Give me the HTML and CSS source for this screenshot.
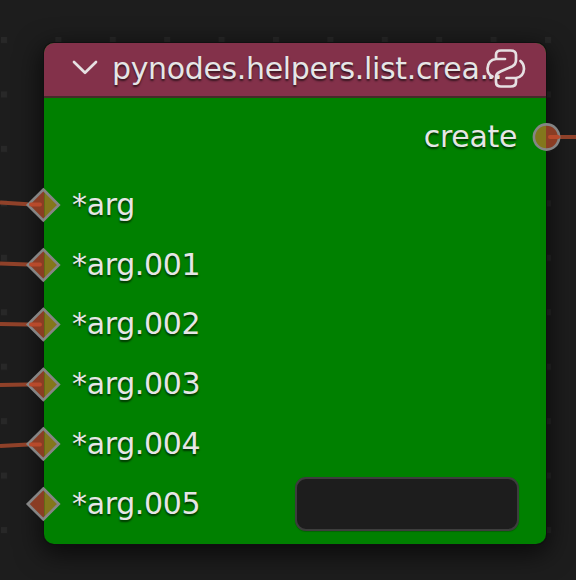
FILE: index.html
```html
<!DOCTYPE html>
<html lang="en">
<head>
<meta charset="utf-8">
<title>Node editor</title>
<link rel="stylesheet" href="styles.css">
</head>
<body>
<main class="editor">
  <svg class="grid" width="576" height="580" aria-hidden="true">
    <defs><pattern id="dots" x="1" y="37" width="54.4" height="54.45" patternUnits="userSpaceOnUse"><rect width="6" height="6" fill="#282828"/></pattern></defs>
    <rect width="576" height="580" fill="url(#dots)"/>
  </svg>
  <section class="node">
    <header class="header">
      <svg class="chevron" width="28" height="20" viewBox="0 0 28 20"><path d="M3 4 L14 14.7 L25 4"/></svg>
      <span class="title">pynodes.helpers.list.crea<span class="dots">...</span></span>
      <svg class="python" width="42" height="42" viewBox="0 0 42 42"><path d="M20 11H11V7Q11 2.500 16 2.500H25.500Q31 2.500 31 7V12Q31 16.500 27 18.500L15.500 23.500Q11 25.500 11 29V34Q11 38.500 16 38.500H25.500Q31 38.500 31 34V30H21.500M11 11Q3 12 2.500 20.500Q2.500 26.500 7.500 28.500M35.500 13Q39 16 39 21Q38.500 29 31 30"/></svg>
    </header>
    <div class="output">create</div>
    <div class="inputs">
      <div class="row">*arg</div>
      <div class="row">*arg.001</div>
      <div class="row">*arg.002</div>
      <div class="row">*arg.003</div>
      <div class="row">*arg.004</div>
      <div class="row"><span>*arg.005</span><div class="field"></div></div>
    </div>
  </section>
  <svg class="links" width="576" height="580" aria-hidden="true">
    <defs>
      <g id="socket"><path class="outside" d="M.5 -16V16L-16 0Z"/><path class="inside" d="M.5 -16L15.500 0L.5 16Z"/><path class="ring" d="M-.7 -15.500L14.800 0L-.7 15.500L-16.200 0Z"/></g>
    </defs>
    <g class="wires">
      <path d="M0 202.500L28 204.200"/><path d="M0 263.500L28 264.500"/><path d="M0 324L28 324.500"/><path d="M0 385L28 384.500"/><path d="M0 446L28 444.500"/><path d="M559 137H576"/>
    </g>
    <use href="#socket" x="44" y="205"/><use href="#socket" x="44" y="265"/><use href="#socket" x="44" y="324.500"/><use href="#socket" x="44" y="384.500"/><use href="#socket" x="44" y="444"/><use href="#socket" x="44" y="504"/>
    <path class="inside" d="M546 124.500A12.500 12.500 0 0 0 546 149.500Z"/><path class="outside" d="M546 124.500A12.500 12.500 0 0 1 546 149.500Z"/>
    <circle class="ring" cx="546.500" cy="137" r="12.600"/>
    <g class="ends">
      <path d="M31 204.500H40"/><path d="M31 264.500H40"/><path d="M31 324.500H40"/><path d="M31 384.500H40"/><path d="M31 444.500H40"/><path d="M550 137H558"/>
    </g>
  </svg>
</main>
</body>
</html>
```
FILE: styles.css
```css
body { margin: 0; background: #1d1d1d; }
.editor {
  position: relative;
  box-sizing: border-box;
  width: 576px;
  height: 580px;
  padding: 43px 30px 36px 44px;
  overflow: hidden;
  background: #1d1d1d;
  color: #e6e6e6;
  font: 30px/36px "DejaVu Sans", sans-serif;
  letter-spacing: -.35px;
  text-shadow: 0 2px 2px rgba(0, 0, 0, .6);
}
.grid, .links { position: absolute; left: 0; top: 0; }
.node {
  position: relative;
  width: 502px;
  height: 501px;
  border-radius: 10px;
  background: #008000;
  box-shadow: 0 0 0 1px #101010, 0 7px 26px 3px rgba(0, 0, 0, .65);
}
.header {
  display: flex;
  align-items: center;
  box-sizing: border-box;
  height: 55px;
  padding: 0 18px 2px 27px;
  border-bottom: 2px solid #442c29;
  border-radius: 10px 10px 0 0;
  background: #83314a;
}
.chevron, .python {
  flex: none;
  fill: none;
  stroke: #e6e0e2;
  stroke-width: 2.7;
  stroke-linecap: round;
  stroke-linejoin: round;
}
.chevron { margin-right: 13px; margin-bottom: 2px; }
.title { width: 373px; white-space: nowrap; }
.dots { letter-spacing: -2.7px; }
.output {
  height: 60px;
  padding: 21px 29px 0 0;
  box-sizing: border-box;
  text-align: right;
}
.inputs { padding-top: 17px; }
.row {
  display: flex;
  align-items: center;
  justify-content: space-between;
  height: 59.8px;
  padding: 0 27px 0 28px;
}
.field {
  box-sizing: border-box;
  width: 224px;
  height: 54px;
  border: 2px solid #3d3d3d;
  border-radius: 11px;
  background: #1d1d1d;
  box-shadow: 0 1px 1px #006500;
}
.wires path { fill: none; stroke: #8f4129; stroke-width: 4; }
.ends path { stroke: #b84a2b; stroke-width: 4; stroke-linecap: round; }
.outside { fill: #8a3d24; }
.inside { fill: #83771c; }
.ring { fill: none; stroke: #858585; stroke-width: 2.6; }
```
